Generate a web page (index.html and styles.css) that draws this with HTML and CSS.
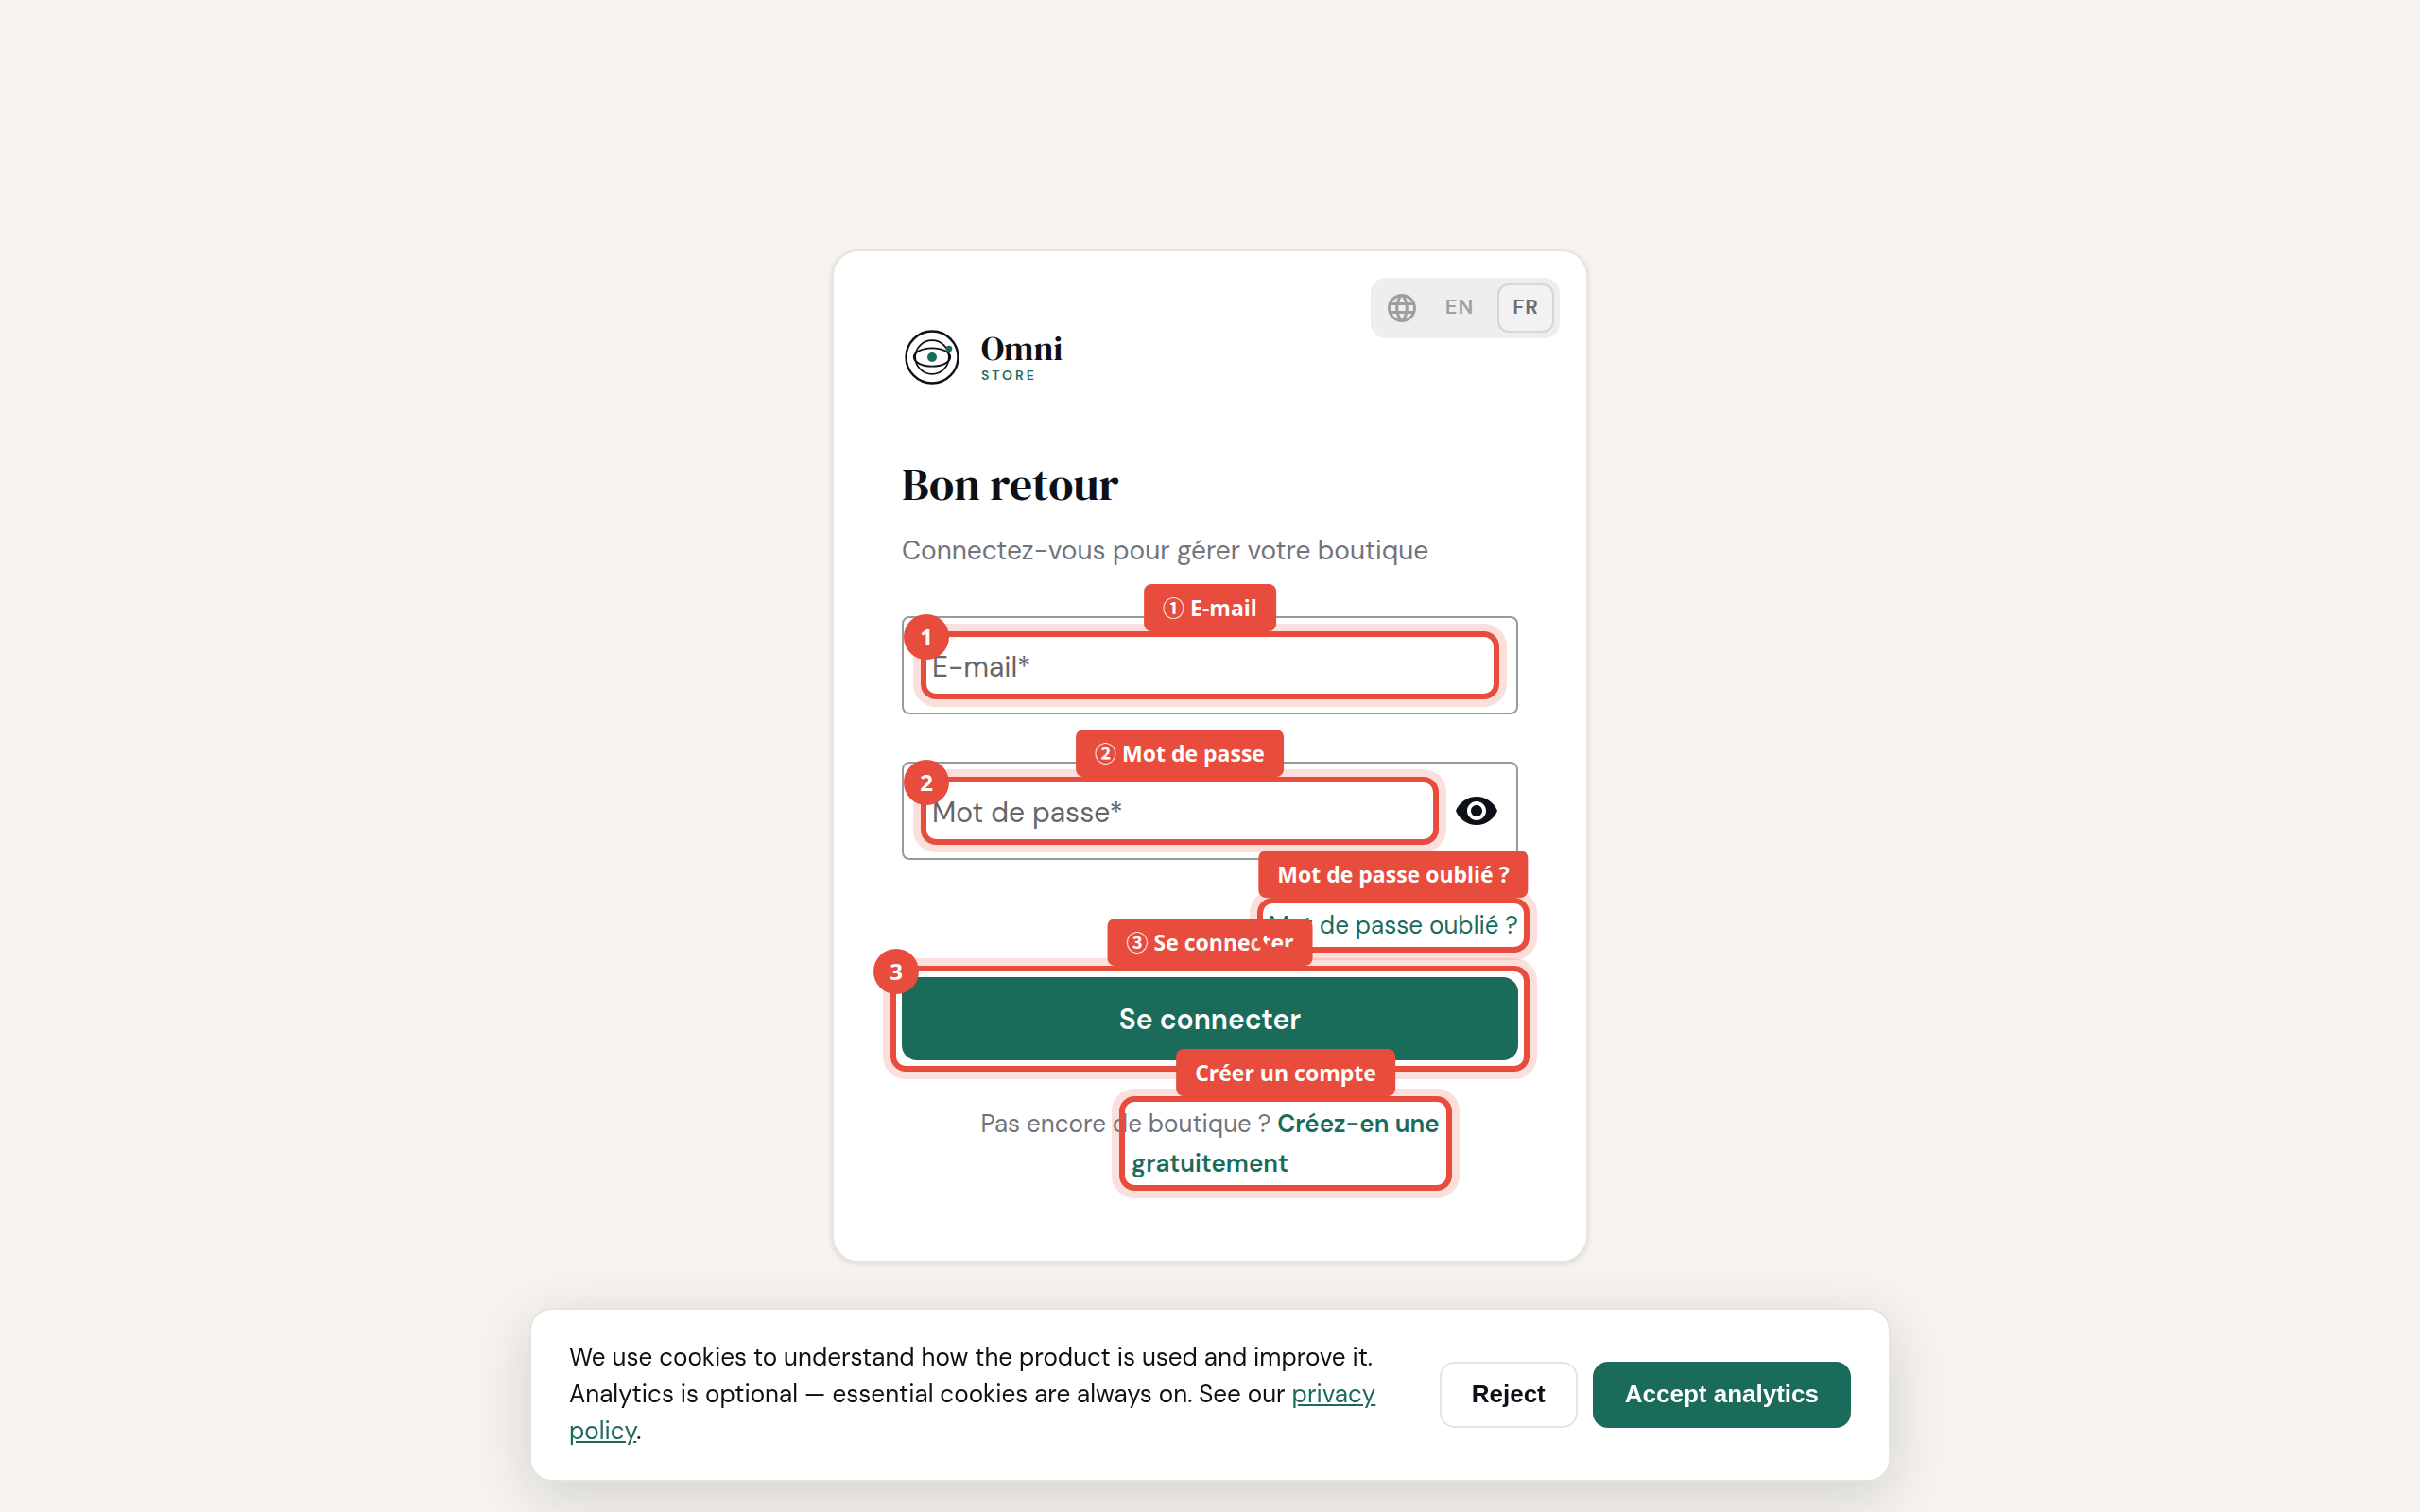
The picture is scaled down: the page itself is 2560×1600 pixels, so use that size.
FILE: index.html
```html
<!DOCTYPE html>
<html lang="fr">
<head>
  <meta charset="UTF-8" />
  <meta name="viewport" content="width=device-width, initial-scale=1.0">
  <title>Connexion - Omni Store</title>
  <link rel="stylesheet" href="styles.css">
</head>
<body>
  <main class="card">
    <div class="lang" role="group" aria-label="Langue">
      <svg class="lang-icon" viewBox="0 0 24 24" aria-hidden="true"><path d="M11.99 2C6.47 2 2 6.48 2 12s4.47 10 9.99 10C17.52 22 22 17.52 22 12S17.52 2 11.99 2zm6.93 6h-2.95c-.32-1.25-.78-2.45-1.38-3.56 1.84.63 3.37 1.91 4.33 3.56zM12 4.04c.83 1.2 1.48 2.53 1.91 3.96h-3.82c.43-1.43 1.08-2.76 1.91-3.96zM4.26 14C4.1 13.36 4 12.69 4 12s.1-1.36.26-2h3.38c-.08.66-.14 1.32-.14 2s.06 1.34.14 2H4.26zm.82 2h2.95c.32 1.25.78 2.45 1.38 3.56-1.84-.63-3.37-1.9-4.33-3.56zm2.95-8H5.08c.96-1.66 2.49-2.93 4.33-3.56C8.81 5.55 8.35 6.75 8.03 8zM12 19.96c-.83-1.2-1.48-2.53-1.91-3.96h3.82c-.43 1.43-1.08 2.76-1.91 3.96zM14.34 14H9.66c-.09-.66-.16-1.32-.16-2s.07-1.35.16-2h4.68c.09.65.16 1.32.16 2s-.07 1.34-.16 2zm.25 5.56c.6-1.11 1.06-2.31 1.38-3.56h2.95c-.96 1.65-2.49 2.93-4.33 3.56zM16.36 14c.08-.66.14-1.32.14-2s-.06-1.34-.14-2h3.38c.16.64.26 1.31.26 2s-.1 1.36-.26 2h-3.38z"/></svg>
      <button type="button" class="lang-btn">EN</button>
      <button type="button" class="lang-btn active">FR</button>
    </div>

    <div class="logo">
      <svg class="logo-mark" viewBox="0 0 64 64" fill="none" stroke="#0d1117" aria-hidden="true">
        <circle cx="32" cy="32" r="27.5" stroke-width="2.4"/>
        <circle cx="32" cy="32" r="17.8" stroke-width="1.7"/>
        <ellipse cx="32" cy="32" rx="19.2" ry="9.6" stroke-width="1.9"/>
        <circle cx="32" cy="32" r="5" fill="#1b6b5a" stroke="none"/>
        <circle cx="50" cy="23" r="3.3" fill="#1b6b5a" stroke="none"/>
      </svg>
      <div class="logo-text">
        <span class="logo-name">Omni</span>
        <span class="logo-sub">STORE</span>
      </div>
    </div>

    <h1>Bon retour</h1>
    <p class="subtitle">Connectez-vous pour gérer votre boutique</p>

    <form>
      <div class="field">
        <div class="target">
          <input type="email" placeholder="E-mail*" aria-label="E-mail">
          <div class="highlight"><span class="badge">1</span><span class="tag">① E-mail</span></div>
        </div>
      </div>

      <div class="field">
        <div class="target">
          <input type="password" placeholder="Mot de passe*" aria-label="Mot de passe">
          <div class="highlight"><span class="badge">2</span><span class="tag">② Mot de passe</span></div>
        </div>
        <button type="button" class="eye-btn" aria-label="Afficher le mot de passe">
          <svg viewBox="0 0 24 24"><path d="M12 4.5C7 4.5 2.73 7.61 1 12c1.73 4.39 6 7.5 11 7.5s9.27-3.11 11-7.5c-1.73-4.39-6-7.5-11-7.5zM12 17c-2.76 0-5-2.24-5-5s2.24-5 5-5 5 2.24 5 5-2.24 5-5 5zm0-8c-1.66 0-3 1.34-3 3s1.34 3 3 3 3-1.34 3-3-1.34-3-3-3z"/></svg>
        </button>
      </div>

      <div class="target forgot">
        <a href="#">Mot de passe oublié ?</a>
        <div class="highlight on-top"><span class="tag">Mot de passe oublié ?</span></div>
      </div>

      <div class="target">
        <button type="submit" class="submit-btn">Se connecter</button>
        <div class="highlight"><span class="badge">3</span><span class="tag">③ Se connecter</span></div>
      </div>
    </form>

    <div class="target signup">
      <p>Pas encore de boutique ? <a href="#">Créez-en une<br>gratuitement</a></p>
      <div class="highlight on-top signup-highlight"><span class="tag">Créer un compte</span></div>
    </div>
  </main>

  <section class="cookies" aria-label="Cookies" lang="en">
    <p>We use cookies to understand how the product is used and improve it. Analytics is optional — essential cookies are always on. See our <a href="#">privacy policy</a>.</p>
    <button type="button" class="cookie-btn">Reject</button>
    <button type="button" class="cookie-btn accept">Accept analytics</button>
  </section>
</body>
</html>
```
FILE: styles.css
```css
* {
  box-sizing: border-box;
}
body {
  margin: 0;
  min-height: 100vh;
  display: flex;
  justify-content: center;
  align-items: center;
  background: #f7f4ef;
  color: #0d1117;
  font-family: "DM Sans", Inter, sans-serif;
  font-size: 26px;
}
button, input {
  font-family: inherit;
  margin: 0;
  padding: 0;
  border: none;
  background: none;
}
button {
  cursor: pointer;
}
a {
  color: #1b6b5a;
}
.card {
  position: relative;
  width: 100%;
  max-width: 800px;
  padding: 80px 72px 82px;
  background: white;
  border: 2px solid #e8e4dc;
  border-radius: 28px;
  box-shadow: 0 2px 6px rgba(13, 17, 23, 0.12);
}

/* Language switch */
.lang {
  position: absolute;
  top: 28px;
  right: 28px;
  display: flex;
  align-items: center;
  gap: 10px;
  padding: 6px;
  border-radius: 16px;
  background: #eeeeee;
}
.lang-icon {
  width: 36px;
  height: 36px;
  margin: 0 3px 0 9px;
  fill: #9e9e9e;
}
.lang-btn {
  width: 60px;
  height: 52px;
  padding-bottom: 3px;
  border: 2px solid transparent;
  border-radius: 12px;
  font-size: 22px;
  font-weight: 600;
  letter-spacing: 1px;
  color: #a0a0a0;
}
.lang-btn.active {
  background: #f2f2f2;
  border-color: #d6d6d6;
  color: #6b6e73;
}

/* Logo */
.logo {
  display: flex;
  align-items: center;
  gap: 20px;
}
.logo-mark {
  width: 64px;
  height: 64px;
}
.logo-text {
  display: flex;
  flex-direction: column;
  gap: 2px;
}
.logo-name {
  font-family: "DM Serif Display", "Liberation Serif", serif;
  font-size: 36px;
  line-height: 36px;
}
.logo-sub {
  font-size: 14px;
  font-weight: 600;
  line-height: 16px;
  letter-spacing: 3px;
  color: #1b6b5a;
}

h1 {
  margin: 72px 0 0;
  font-family: "DM Serif Display", "Liberation Serif", serif;
  font-size: 48px;
  font-weight: normal;
  line-height: 60px;
}
.subtitle {
  margin: 20px 0 48px;
  font-size: 28px;
  line-height: 42px;
  color: #71757b;
}

/* Form */
.field {
  display: flex;
  align-items: center;
  gap: 28px;
  height: 104px;
  margin-bottom: 50px;
  padding: 0 30px;
  border: 2px solid #9a9a9a;
  border-radius: 8px;
}
.field .target {
  flex: 1;
}
.field:has(.eye-btn) {
  padding-right: 18px;
}
.field input {
  display: block;
  width: 100%;
  height: 48px;
  padding-top: 2px;
  font-size: 30px;
  outline: none;
}
.field input::placeholder {
  color: #666666;
  opacity: 1;
}
.eye-btn {
  height: 48px;
}
.eye-btn svg {
  display: block;
  width: 48px;
  height: 48px;
  fill: #0d1117;
}
.forgot {
  width: fit-content;
  margin: 52px 0 38px auto;
}
.forgot a {
  display: block;
  line-height: 34px;
  text-decoration: none;
}
.submit-btn {
  display: block;
  width: 100%;
  height: 88px;
  border-radius: 16px;
  background: #1b6b5a;
  color: white;
  font-size: 30px;
  font-weight: 600;
}
.signup {
  margin-top: 46px;
  text-align: center;
  line-height: 42px;
  color: #71757b;
}
.signup p {
  margin: 0;
}
.signup a {
  font-weight: 600;
  text-decoration: none;
}

/* Guide highlights */
.target {
  position: relative;
}
.highlight {
  position: absolute;
  inset: -12px;
  border: 6px solid #e74c3c;
  border-radius: 16px;
  box-shadow: 0 0 0 8px rgba(231, 76, 60, 0.18);
  pointer-events: none;
}
.highlight.on-top {
  z-index: 1;
}
.signup-highlight {
  inset: -8px 70px -8px 230px;
}
.badge {
  position: absolute;
  top: -24px;
  left: -24px;
  width: 48px;
  height: 48px;
  border-radius: 50%;
  background: #e74c3c;
  color: white;
  font: bold 24px/48px "Segoe UI", "Open Sans", sans-serif;
  text-align: center;
}
.tag {
  position: absolute;
  bottom: 100%;
  left: 50%;
  transform: translateX(-50%);
  margin-bottom: 6px;
  padding: 0 20px;
  border-radius: 8px;
  background: #e74c3c;
  color: white;
  font: bold 23px/50px "Segoe UI", "Open Sans", "Noto Sans CJK JP", sans-serif;
  white-space: nowrap;
}

/* Cookie banner */
.cookies {
  position: fixed;
  left: 32px;
  right: 32px;
  bottom: 32px;
  display: flex;
  align-items: center;
  gap: 16px;
  max-width: 1440px;
  margin: 0 auto;
  padding: 31px 40px 32px;
  background: white;
  border: 2px solid #e8e4dc;
  border-radius: 24px;
  box-shadow: 0 16px 64px rgba(13, 17, 23, 0.16);
}
.cookies p {
  flex: 1;
  margin: 0 32px 0 0;
  line-height: 39px;
}
.cookie-btn {
  height: 70px;
  padding: 0 32px;
  border: 2px solid #e8e4dc;
  border-radius: 16px;
  font: bold 26px "Liberation Sans", Arial, sans-serif;
  color: #0d1117;
  white-space: nowrap;
}
.cookie-btn.accept {
  background: #1b6b5a;
  border-color: #1b6b5a;
  color: white;
}
```
